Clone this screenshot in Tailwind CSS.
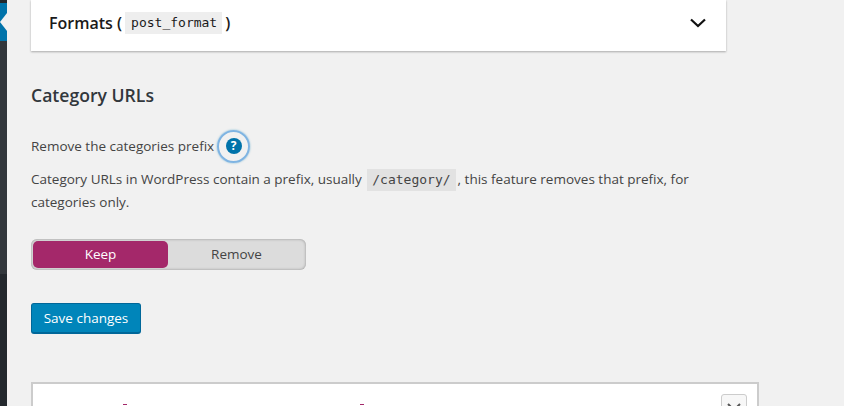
<!DOCTYPE html>
<html>
<head>
<meta charset="utf-8">
<script src="https://cdn.jsdelivr.net/npm/@tailwindcss/browser@4"></script>
</head>
<body class="bg-[#f1f1f1]">
<div class="flex h-[406px] w-[844px] overflow-hidden bg-[#f1f1f1] font-['Open_Sans',sans-serif] text-[#444]">
  <aside class="w-[7px] shrink-0 bg-[#23282d] flex flex-col">
    <div class="h-[3px]"></div>
    <div class="h-[38px] bg-[#0073aa]">
      <svg width="7" height="38" viewBox="0 0 7 38" class="block"><polygon points="0,19 7,10 7,28" fill="#f1f1f1"/></svg>
    </div>
    <div class="h-[233px] bg-[#32373c]"></div>
  </aside>
  <main class="flex-1 pl-[24px]">
    <section class="w-[695px] h-[51px] bg-white shadow-[0_1px_2px_rgba(0,0,0,0.3)] pl-[18px] pr-[20px] pb-[5px] flex items-center justify-between">
      <h2 class="text-[16px] font-semibold text-[#1a1a1a] flex items-center">Formats (<code class="mx-[3px] pl-[6px] pr-[5px] h-[22px] leading-[22px] bg-[#eee] font-['DejaVu_Sans_Mono',monospace] text-[13px] font-normal">post_format</code>)</h2>
      <svg width="16" height="10" viewBox="0 0 16 10" fill="none" stroke="#111" stroke-width="2.2"><path d="M1 1.5 L8 8 L15 1.5"/></svg>
    </section>
    <h2 class="mt-[32px] text-[17.6px] leading-[24px] font-semibold text-[#32373c]">Category URLs</h2>
    <div class="mt-[22px] flex items-center h-[34px] text-[13.5px]">
      <span>Remove the categories prefix</span>
      <button class="ml-[3px] w-[33px] h-[33px] rounded-full border-2 border-[#7fb4e2] shadow-[0_0_2px_rgba(30,140,190,0.6)] flex items-center justify-center">
        <span class="w-[16px] h-[16px] rounded-full bg-[#0073aa] text-white text-[12px] leading-[16px] font-bold text-center">?</span>
      </button>
    </div>
    <p class="mt-[5px] w-[700px] text-[13.5px] leading-[22px]">Category URLs in WordPress contain a prefix, usually <code class="mx-[2px] px-[5px] inline-block h-[22px] leading-[22px] bg-[#e2e2e2] font-['DejaVu_Sans_Mono',monospace] text-[13px]">/category/</code>, this feature removes that prefix, for categories only.</p>
    <div class="mt-[26px] w-[275px] h-[31px] rounded-[6px] bg-[#dcdcdc] shadow-[inset_0_0_3px_rgba(0,0,0,0.35)] p-[2px] flex text-[13.5px] leading-[27px] text-center">
      <span class="w-[135px] rounded-[5px] bg-[#a4286a] text-white">Keep</span>
      <span class="flex-1 pl-[1px]">Remove</span>
    </div>
    <button class="mt-[33px] block w-[110px] h-[31px] rounded-[3px] bg-[#0085ba] border border-[#006799] border-b-2 text-white text-[13.5px]">Save changes</button>
    <section class="mt-[48px] w-[728px] h-[60px] bg-white border-2 border-b-0 border-[#ccc] relative">
      <div class="absolute left-[90px] top-[20px] w-[4px] h-[1px] bg-[#a4286a]"></div>
      <div class="absolute left-[327px] top-[20px] w-[4px] h-[1px] bg-[#a4286a]"></div>
      <div class="absolute right-[10px] top-[10px] w-[26px] h-[26px] rounded-[3px] border border-[#ccc] bg-[#f7f7f7] flex justify-center pt-[8px]">
        <svg width="14" height="9" viewBox="0 0 14 9" fill="none" stroke="#555" stroke-width="2"><path d="M1 1 L7 7 L13 1"/></svg>
      </div>
    </section>
  </main>
</div>
</body>
</html>
